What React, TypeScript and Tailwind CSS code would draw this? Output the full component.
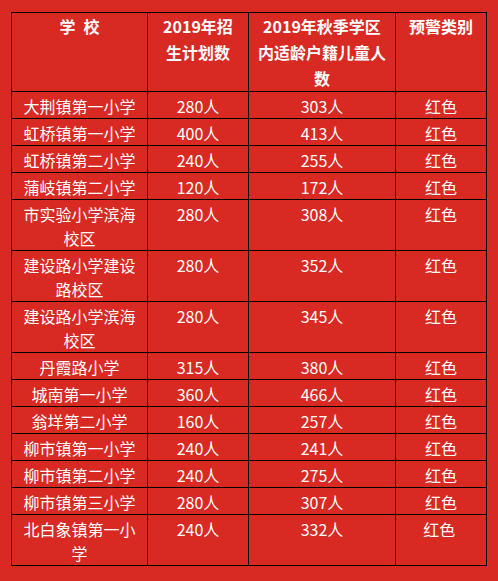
import React from "react";

type Row = [string, string, string, string];

const rows: Row[] = [
  ["大荆镇第一小学", "280人", "303人", "红色"],
  ["虹桥镇第一小学", "400人", "413人", "红色"],
  ["虹桥镇第二小学", "240人", "255人", "红色"],
  ["蒲岐镇第二小学", "120人", "172人", "红色"],
  ["市实验小学滨海校区", "280人", "308人", "红色"],
  ["建设路小学建设路校区", "280人", "352人", "红色"],
  ["建设路小学滨海校区", "280人", "345人", "红色"],
  ["丹霞路小学", "315人", "380人", "红色"],
  ["城南第一小学", "360人", "466人", "红色"],
  ["翁垟第二小学", "160人", "257人", "红色"],
  ["柳市镇第一小学", "240人", "241人", "红色"],
  ["柳市镇第二小学", "240人", "275人", "红色"],
  ["柳市镇第三小学", "280人", "307人", "红色"],
  ["北白象镇第一小学", "240人", "332人", "红色\u00a0"],
];

const doubles = new Set([4, 5, 6, 13]);

const headers = ["学\u2002校", "2019年招生计划数", "2019年秋季学区内适龄户籍儿童人数", "预警类别"];

export default function App() {
  return (
    <div
      className="w-[498px] h-[581px] bg-[#d92923] pl-[11px] pt-[12px] text-white text-[16px]"
      style={{ fontFamily: '"Noto Sans CJK SC", "Noto Sans", sans-serif' }}
    >
      <div className="grid grid-cols-[136px_101px_147px_91px] w-[476px] border-l border-t border-black">
        {headers.map((h, i) => (
          <div
            key={"h" + i}
            className="border-r border-b border-black text-center font-bold leading-[26px] px-[8px] h-[79px] overflow-hidden"
          >
            {h}
          </div>
        ))}
        {rows.map((r, i) =>
          r.map((c, j) => (
            <div
              key={i + "-" + j}
              className={
                doubles.has(i)
                  ? "border-r border-b border-black text-center leading-[24px] pt-[2px] px-[8px] h-[51px] overflow-hidden"
                  : "border-r border-b border-black text-center leading-[24px] pt-[2px] px-[8px] h-[27px] overflow-hidden"
              }
            >
              {c}
            </div>
          ))
        )}
      </div>
    </div>
  );
}
